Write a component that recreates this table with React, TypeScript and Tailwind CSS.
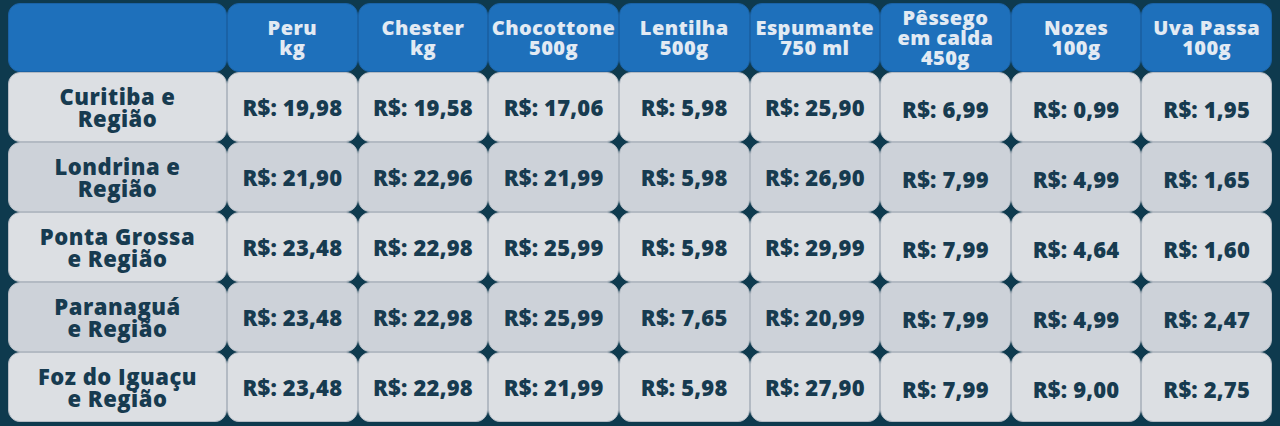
const headers = [
  ['Peru', 'kg'],
  ['Chester', 'kg'],
  ['Chocottone', '500g'],
  ['Lentilha', '500g'],
  ['Espumante', '750 ml'],
  ['Pêssego', 'em calda', '450g'],
  ['Nozes', '100g'],
  ['Uva Passa', '100g'],
]

const rows: { label: string[]; prices: string[] }[] = [
  { label: ['Curitiba e', 'Região'], prices: ['19,98', '19,58', '17,06', '5,98', '25,90', '6,99', '0,99', '1,95'] },
  { label: ['Londrina e', 'Região'], prices: ['21,90', '22,96', '21,99', '5,98', '26,90', '7,99', '4,99', '1,65'] },
  { label: ['Ponta Grossa', 'e Região'], prices: ['23,48', '22,98', '25,99', '5,98', '29,99', '7,99', '4,64', '1,60'] },
  { label: ['Paranaguá', 'e Região'], prices: ['23,48', '22,98', '25,99', '7,65', '20,99', '7,99', '4,99', '2,47'] },
  { label: ['Foz do Iguaçu', 'e Região'], prices: ['23,48', '22,98', '21,99', '5,98', '27,90', '7,99', '9,00', '2,75'] },
]

export default function App() {
  return (
    <div
      className="w-[1280px] h-[426px] bg-[#0e3a4e] pl-[8px] pr-[8px] pt-[3px] overflow-hidden"
      style={{ fontFamily: '"Open Sans", "Noto Sans", sans-serif' }}
    >
      <div className="grid grid-cols-[219px_repeat(8,minmax(0,1fr))] grid-rows-[69px_repeat(5,70px)]">
        <div className="bg-[#1e70bb] rounded-[12px] border border-[#1a62a6]" />
        {headers.map((h, i) => (
          <div
            key={i}
            className="bg-[#1e70bb] rounded-[12px] border border-[#1a62a6] flex flex-col items-center justify-center text-[#e2eaf3] font-extrabold text-[20px] leading-[20px] tracking-[0.4px] text-center"
          >
            {h.map((line) => (
              <span key={line}>{line}</span>
            ))}
          </div>
        ))}
        {rows.map((r, ri) => {
          const bg = ri % 2 === 1 ? 'bg-[#cdd2d9]' : 'bg-[#dcdfe3]'
          return (
            <div key={ri} className="contents">
              <div
                className={`${bg} rounded-[12px] border border-[#b3bac3] flex flex-col items-center justify-center text-[#173b50] font-extrabold text-[22px] leading-[22px] tracking-[0.5px] text-center`}
              >
                {r.label.map((line) => (
                  <span key={line}>{line}</span>
                ))}
              </div>
              {r.prices.map((p, pi) => (
                <div
                  key={pi}
                  className={`${bg} rounded-[12px] border border-[#b3bac3] flex items-center justify-center text-[#173b50] font-extrabold text-[22px] tracking-[0.2px] ${pi >= 5 ? 'pt-[4px]' : ''}`}
                >
                  R$: {p}
                </div>
              ))}
            </div>
          )
        })}
      </div>
    </div>
  )
}
